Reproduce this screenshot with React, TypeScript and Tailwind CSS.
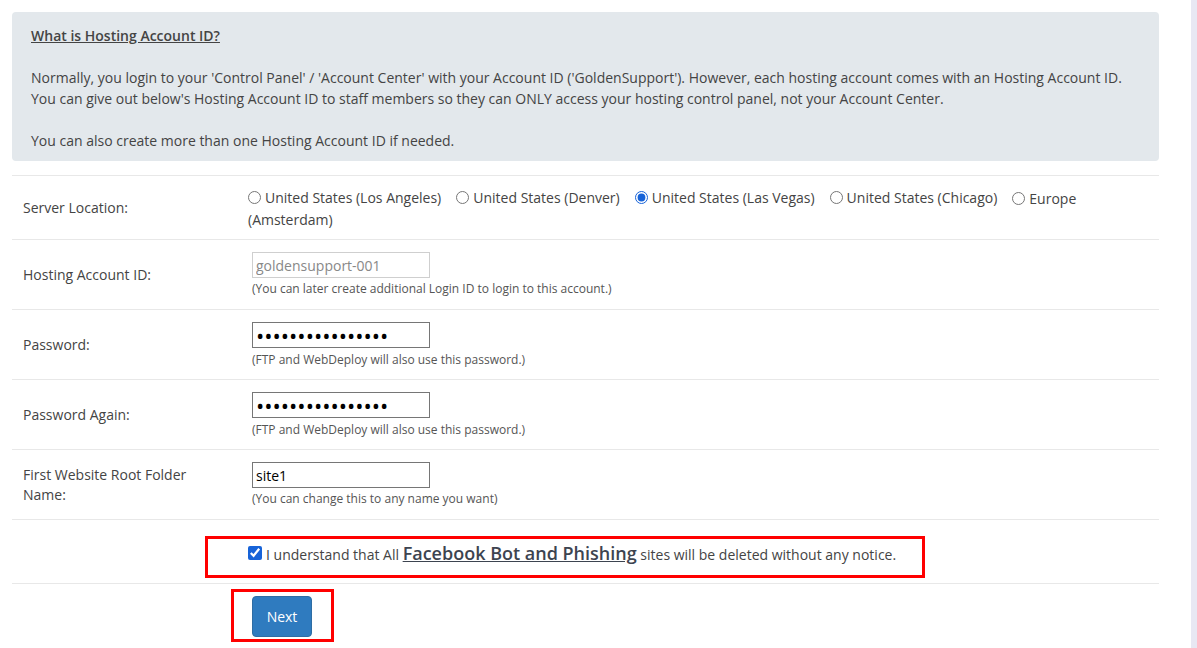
import { useState } from 'react';

const locations = [
  'United States (Los Angeles)',
  'United States (Denver)',
  'United States (Las Vegas)',
  'United States (Chicago)',
];

function Row({ label, children, className = '' }: { label?: React.ReactNode; children: React.ReactNode; className?: string }) {
  return (
    <div className={`relative flex items-center border-t border-[#e8e8e8] ${className}`}>
      <div className="w-[236px] shrink-0 pl-[11px] leading-[20px]">{label}</div>
      <div className="flex-1">{children}</div>
    </div>
  );
}

export default function App() {
  const [loc, setLoc] = useState('United States (Las Vegas)');
  const [agree, setAgree] = useState(true);
  const [folder, setFolder] = useState('site1');

  return (
    <div className="flex h-[648px] w-[1197px] overflow-hidden bg-white font-['Open_Sans',sans-serif] text-[14px] text-[#444]">
      <div className="flex-1 pl-3 pr-8 pt-3">
        <div className="rounded-[4px] bg-[#e3e8ec] px-[19px] pb-[10px] pt-[13px] leading-[21px]">
          <div className="font-semibold underline">What is Hosting Account ID?</div>
          <div className="h-[21px]" />
          <p>
            Normally, you login to your 'Control Panel' / 'Account Center' with your Account ID ('GoldenSupport'). However, each hosting account comes with an Hosting Account ID.
            <br />
            You can give out below's Hosting Account ID to staff members so they can ONLY access your hosting control panel, not your Account Center.
          </p>
          <div className="h-[21px]" />
          <p>You can also create more than one Hosting Account ID if needed.</p>
        </div>

        <div className="mt-[14px]">
          <Row label="Server Location:" className="h-[64px]">
            <div className="pt-[1px] leading-[21px]">
              {locations.map((l) => (
                <label key={l} className="mr-[15px] inline-flex cursor-pointer items-center gap-[4px]">
                  <input
                    type="radio"
                    name="loc"
                    checked={loc === l}
                    onChange={() => setLoc(l)}
                    className="m-0 h-[13px] w-[13px] accent-[#1763d8]"
                  />
                  {l}
                </label>
              ))}
              <label className="cursor-pointer">
                <input
                  type="radio"
                  name="loc"
                  checked={loc === 'Europe (Amsterdam)'}
                  onChange={() => setLoc('Europe (Amsterdam)')}
                  className="m-0 mr-[4px] h-[13px] w-[13px] align-[-1px] accent-[#1763d8]"
                />
                Europe
                <br />
                (Amsterdam)
              </label>
            </div>
          </Row>

          <Row label="Hosting Account ID:" className="h-[70px]">
            <div className="pl-1">
              <input
                readOnly
                value="goldensupport-001"
                className="h-[26px] w-[178px] border border-[#cfcfcf] px-[3px] text-[14px] text-[#888] outline-none"
              />
              <div className="mt-[2px] text-[12px] leading-[17px] text-[#555]">(You can later create additional Login ID to login to this account.)</div>
            </div>
          </Row>

          {['Password:', 'Password Again:'].map((lbl) => (
            <Row key={lbl} label={lbl} className="h-[70px]">
              <div className="pl-1">
                <input
                  type="password"
                  defaultValue="goldensupport123"
                  className="h-[26px] w-[178px] border border-[#767676] px-[3px] text-[22px] leading-none text-black outline-none"
                />
                <div className="mt-[2px] text-[12px] leading-[17px] text-[#555]">(FTP and WebDeploy will also use this password.)</div>
              </div>
            </Row>
          ))}

          <Row
            label={
              <>
                First Website Root Folder
                <br />
                Name:
              </>
            }
            className="h-[70px]"
          >
            <div className="pl-1">
              <input
                value={folder}
                onChange={(e) => setFolder(e.target.value)}
                className="h-[26px] w-[178px] border border-[#767676] px-[3px] text-[14px] text-black outline-none"
              />
              <div className="mt-[2px] text-[12px] leading-[17px] text-[#555]">(You can change this to any name you want)</div>
            </div>
          </Row>

          <Row className="h-[64px]">
            <label className="flex cursor-pointer items-center gap-[4px] pt-[3px]">
              <input
                type="checkbox"
                checked={agree}
                onChange={(e) => setAgree(e.target.checked)}
                className="m-0 h-[14px] w-[14px] accent-[#1763d8]"
              />
              <span>
                I understand that All{' '}
                <a className="text-[18px] font-semibold text-[#3d4450] underline">Facebook Bot and Phishing</a> sites will be deleted without any notice.
              </span>
            </label>
            <div className="pointer-events-none absolute left-[193px] top-[16px] h-[42px] w-[720px] border-[3px] border-[#ff0000]" />
          </Row>

          <Row className="h-[65px] items-start">
            <div className="pl-1 pt-[12px]">
              <button className="h-[41px] w-[60px] rounded-[4px] border border-[#2e6da4] bg-[#2f7bbf] text-[14px] text-white">Next</button>
            </div>
            <div className="pointer-events-none absolute left-[219px] top-[5px] h-[53px] w-[103px] border-[3px] border-[#ff0000]" />
          </Row>
        </div>
      </div>
      <div className="w-[6px] shrink-0 bg-[#e8e8f3]" />
    </div>
  );
}
